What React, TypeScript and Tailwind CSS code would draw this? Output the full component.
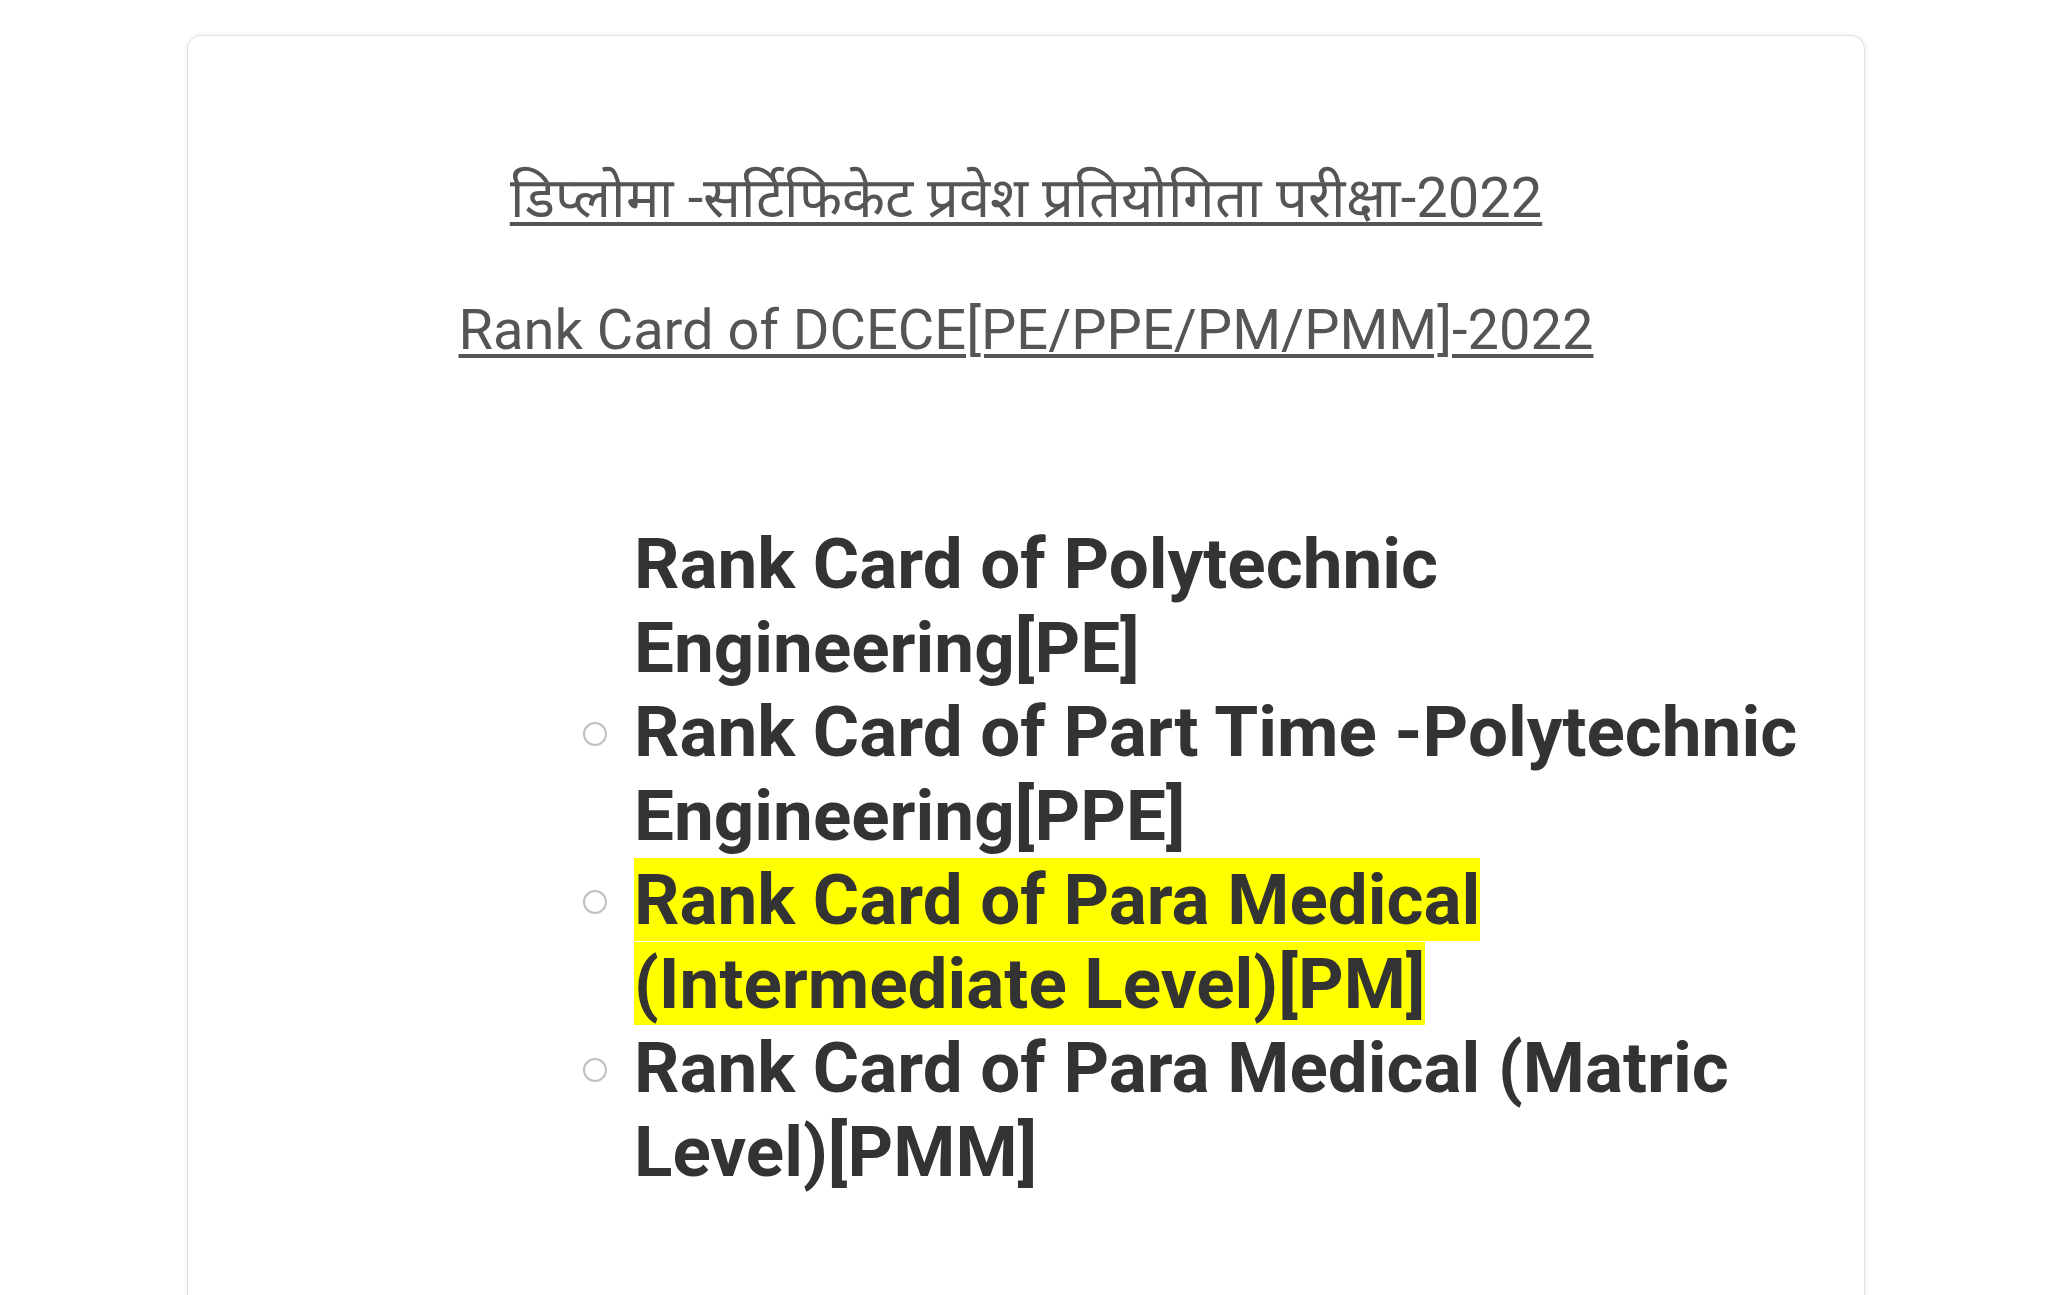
export default function App() {
  const items = [
    { text: "Rank Card of Polytechnic Engineering[PE]", bullet: false, mark: false },
    { text: "Rank Card of Part Time -Polytechnic Engineering[PPE]", bullet: true, mark: false },
    { text: "Rank Card of Para Medical (Intermediate Level)[PM]", bullet: true, mark: true },
    { text: "Rank Card of Para Medical (Matric Level)[PMM]", bullet: true, mark: false },
  ];
  return (
    <div className="min-h-screen bg-white pt-[35px] font-['Roboto',sans-serif] overflow-hidden h-[1295px]">
      <div className="ml-[187px] w-[1678px] h-[1400px] rounded-[14px] border border-[#e0e0e0] shadow-[0_0_5px_rgba(0,0,0,0.08)] bg-white">
        {/* HEADINGS */}
        <div className="pt-[130px] flex flex-col items-center text-[#555555]">
          <p className="text-[56px] leading-[64px] underline decoration-[4px] underline-offset-[5px]">
            डिप्लोमा -सर्टिफिकेट प्रवेश प्रतियोगिता परीक्षा-2022
          </p>
          <p className="mt-[68px] text-[56px] leading-[64px] underline decoration-[4px] underline-offset-[5px]">
            Rank Card of DCECE[PE/PPE/PM/PMM]-2022
          </p>
        </div>
        {/* LIST */}
        <ul className="mt-[160px] pl-[446px] pr-[40px] text-[#333333] font-bold text-[71px] leading-[84px]">
          {items.map((item) => (
            <li key={item.text} className="relative">
              {item.bullet && (
                <span className="absolute left-[-51px] top-[32px] w-[24px] h-[24px] rounded-full border-[2px] border-[#c0c0c0]" />
              )}
              {item.mark ? <span className="bg-[#ffff00]">{item.text}</span> : item.text}
            </li>
          ))}
        </ul>
      </div>
    </div>
  );
}
